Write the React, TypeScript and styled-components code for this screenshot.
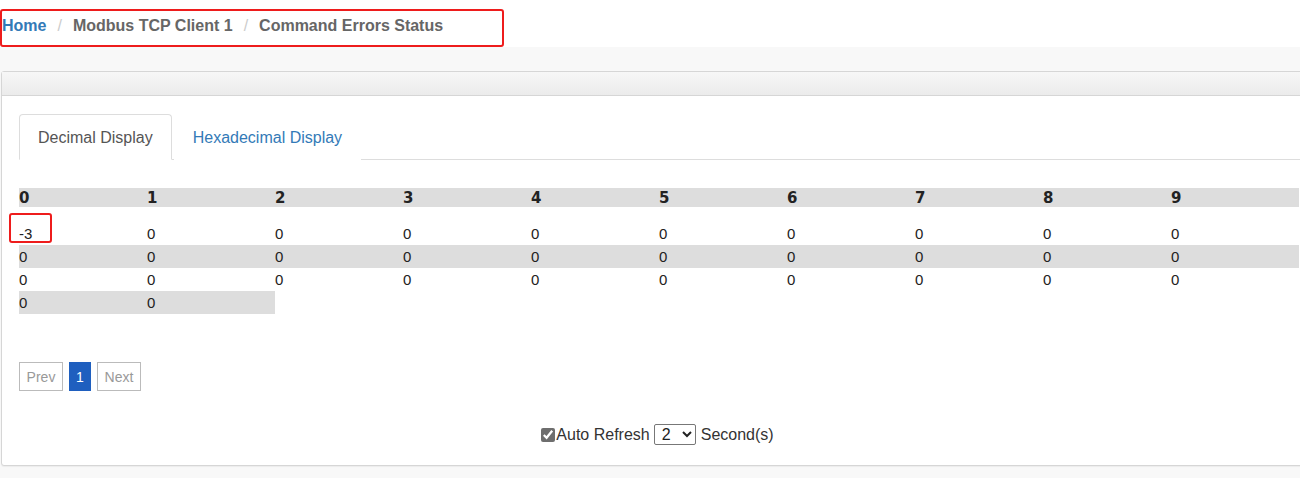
import React from "react";
import styled, { createGlobalStyle } from "styled-components";

const Global = createGlobalStyle`
  html, body { margin: 0; padding: 0; }
  body {
    background: #f8f8f8;
    font-family: "Liberation Sans", Arial, sans-serif;
    color: #333;
    width: 1300px;
    height: 478px;
    overflow: hidden;
  }
`;

const TopBar = styled.div`
  position: relative;
  background: #fff;
  height: 47px;
  display: flex;
  align-items: center;
  padding-left: 2px;
`;

const Crumbs = styled.ol`
  display: flex;
  align-items: center;
  list-style: none;
  margin: 0;
  padding: 0;
  font-size: 16px;
  font-weight: bold;
  margin-top: 5px;
`;

const Crumb = styled.li<{ $link?: boolean }>`
  color: ${(p) => (p.$link ? "#337ab7" : "#666")};
  &:not(:first-child)::before {
    content: "/";
    color: #ccc;
    font-weight: normal;
    padding: 0 11px 0 11px;
  }
`;

const Annotation = styled.div<{ $l: number; $t: number; $w: number; $h: number }>`
  position: absolute;
  left: ${(p) => p.$l}px;
  top: ${(p) => p.$t}px;
  width: ${(p) => p.$w}px;
  height: ${(p) => p.$h}px;
  border: 2px solid #ee1c1c;
  border-radius: 3px;
  box-sizing: border-box;
  pointer-events: none;
`;

const Main = styled.div`
  padding-top: 24px;
  padding-left: 1px;
`;

const Panel = styled.div`
  width: 1316px;
  background: #fff;
  border: 1px solid #d6d6d6;
  border-radius: 3px;
  box-shadow: 0 1px 1px rgba(0, 0, 0, 0.05);
`;

const PanelHeading = styled.div`
  height: 23px;
  background: linear-gradient(#f7f7f7, #ebebeb);
  border-bottom: 1px solid #d6d6d6;
`;

const PanelBody = styled.div`
  position: relative;
  padding: 18px 18px 18px 17px;
`;

const Tabs = styled.ul`
  display: flex;
  list-style: none;
  margin: 0;
  padding: 0;
  border-bottom: 1px solid #ddd;
`;

const Tab = styled.li<{ $active?: boolean }>`
  height: 46px;
  margin-bottom: -1px;
  margin-right: 2px;
  padding: 1px 18px 0 18px;
  display: flex;
  align-items: center;
  font-size: 16px;
  box-sizing: border-box;
  border: 1px solid ${(p) => (p.$active ? "#ddd" : "transparent")};
  border-bottom-color: ${(p) => (p.$active ? "#fff" : "transparent")};
  border-radius: 4px 4px 0 0;
  background: #fff;
  color: ${(p) => (p.$active ? "#555" : "#337ab7")};
`;

const Grid = styled.div`
  margin-top: 28px;
  display: grid;
  grid-template-columns: repeat(10, 128px);
`;

const HeadCell = styled.div`
  height: 19px;
  background: #dddddd;
  font-family: "DejaVu Sans", Verdana, sans-serif;
  font-weight: bold;
  font-size: 15px;
  line-height: 21px;
  color: #222;
`;

const Cell = styled.div<{ $shade?: boolean; $tall?: boolean }>`
  height: ${(p) => (p.$tall ? 38 : 23)}px;
  background: ${(p) => (p.$shade ? "#dddddd" : "transparent")};
  font-size: 15px;
  display: flex;
  align-items: flex-end;
  padding-bottom: 3px;
  box-sizing: border-box;
  color: #222;
`;

const Pager = styled.div`
  display: flex;
  gap: 6px;
  margin-top: 48px;
`;

const PageBtn = styled.div<{ $current?: boolean }>`
  height: 29px;
  min-width: ${(p) => (p.$current ? 22 : 44)}px;
  box-sizing: border-box;
  display: flex;
  align-items: center;
  justify-content: center;
  font-size: 14px;
  border: 1px solid ${(p) => (p.$current ? "#1f5fbf" : "#bbb")};
  background: ${(p) => (p.$current ? "#1f5fbf" : "#fff")};
  color: ${(p) => (p.$current ? "#fff" : "#999")};
`;

const Refresh = styled.div`
  display: flex;
  align-items: center;
  justify-content: center;
  margin-top: 33px;
  font-size: 16px;
  color: #333;
  height: 21px;
  margin-bottom: 2px;
  padding-right: 4px;
`;

const Check = styled.input`
  margin: 0;
  width: 14px;
  height: 14px;
  accent-color: #6e6e6e;
  margin-right: 1px;
`;

const Select = styled.select`
  margin: 0 5px 0 4px;
  width: 42px;
  height: 21px;
  font-family: "Liberation Sans", Arial, sans-serif;
  font-size: 16px;
  border: 1px solid #777;
  border-radius: 2px;
  background: #fff;
  color: #222;
  padding: 0 0 0 3px;
`;

const headers = [0, 1, 2, 3, 4, 5, 6, 7, 8, 9];

export default function App() {
  const rows: string[][] = [
    ["-3", "0", "0", "0", "0", "0", "0", "0", "0", "0"],
    ["0", "0", "0", "0", "0", "0", "0", "0", "0", "0"],
    ["0", "0", "0", "0", "0", "0", "0", "0", "0", "0"],
    ["0", "0"],
  ];
  return (
    <>
      <Global />
      <TopBar>
        <Crumbs>
          <Crumb $link>Home</Crumb>
          <Crumb>Modbus TCP Client 1</Crumb>
          <Crumb>Command Errors Status</Crumb>
        </Crumbs>
        <Annotation $l={0} $t={9} $w={504} $h={38} />
      </TopBar>
      <Main>
        <Panel>
          <PanelHeading />
          <PanelBody>
            <Tabs>
              <Tab $active>Decimal Display</Tab>
              <Tab>Hexadecimal Display</Tab>
            </Tabs>
            <Grid>
              {headers.map((h) => (
                <HeadCell key={h}>{h}</HeadCell>
              ))}
              {rows.map((r, ri) =>
                r.map((v, ci) => (
                  <Cell key={`${ri}-${ci}`} $shade={ri % 2 === 1} $tall={ri === 0}>
                    {v}
                  </Cell>
                ))
              )}
            </Grid>
            <Pager>
              <PageBtn>Prev</PageBtn>
              <PageBtn $current>1</PageBtn>
              <PageBtn>Next</PageBtn>
            </Pager>
            <Refresh>
              <Check type="checkbox" defaultChecked />
              Auto Refresh
              <Select defaultValue="2">
                <option value="1">1</option>
                <option value="2">2</option>
                <option value="5">5</option>
                <option value="10">10</option>
              </Select>
              Second(s)
            </Refresh>
            <Annotation $l={7} $t={117} $w={43} $h={30} />
          </PanelBody>
        </Panel>
      </Main>
    </>
  );
}
